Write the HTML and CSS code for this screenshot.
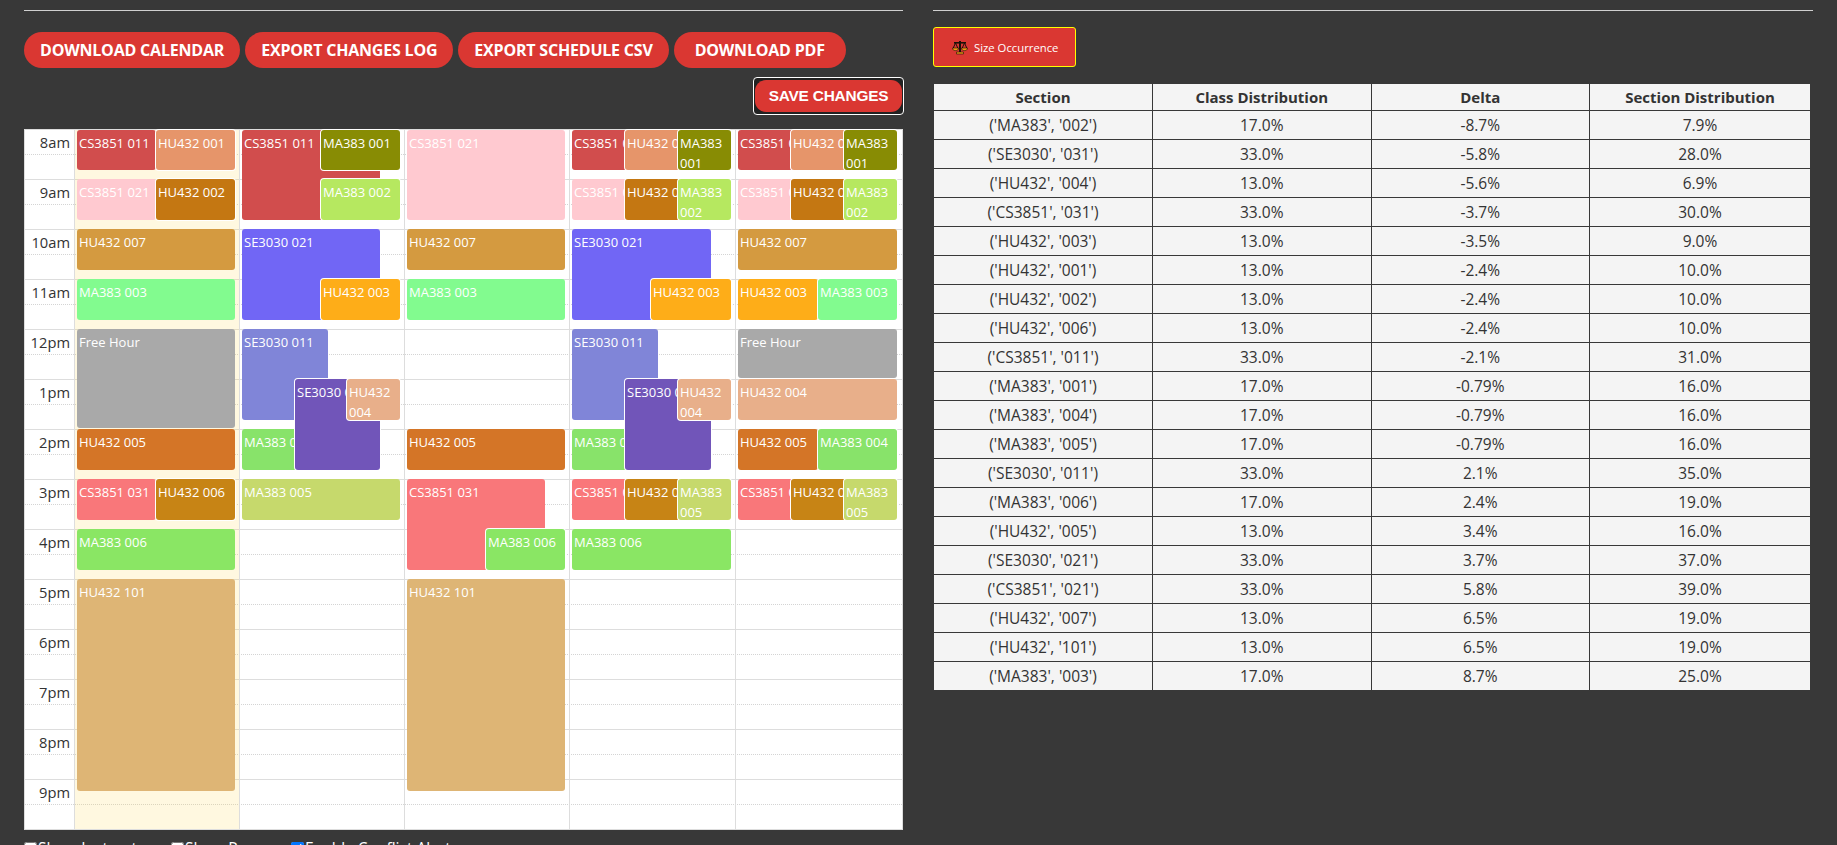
FILE: index.html
```html
<!DOCTYPE html>
<html lang="en">
<head>
  <meta charset="UTF-8" />
  <title>Schedule Editor</title>
  <link rel="stylesheet" href="styles.css">
</head>
<body>
  <div class="page">
    <div class="pane">
      <hr class="rule">
      <div class="actions">
        <button class="pill">Download Calendar</button>
        <button class="pill">Export Changes Log</button>
        <button class="pill">Export Schedule CSV</button>
        <button class="pill pill-wide">Download PDF</button>
      </div>
      <div class="save-row">
        <button class="save"><span class="pill save-inner">Save Changes</span></button>
      </div>

      <div class="calendar">
        <div class="hour"><span class="hour-label">8am</span></div>
        <div class="hour"><span class="hour-label">9am</span></div>
        <div class="hour"><span class="hour-label">10am</span></div>
        <div class="hour"><span class="hour-label">11am</span></div>
        <div class="hour"><span class="hour-label">12pm</span></div>
        <div class="hour"><span class="hour-label">1pm</span></div>
        <div class="hour"><span class="hour-label">2pm</span></div>
        <div class="hour"><span class="hour-label">3pm</span></div>
        <div class="hour"><span class="hour-label">4pm</span></div>
        <div class="hour"><span class="hour-label">5pm</span></div>
        <div class="hour"><span class="hour-label">6pm</span></div>
        <div class="hour"><span class="hour-label">7pm</span></div>
        <div class="hour"><span class="hour-label">8pm</span></div>
        <div class="hour"><span class="hour-label">9pm</span></div>

        <div class="days">
          <div class="day today">
            <div class="event cs011" style="top:0;height:40px;left:2px;width:79px">CS3851 011</div>
            <div class="event hu001 ring" style="top:0;height:40px;left:81px;width:79px">HU432 001</div>
            <div class="event cs021" style="top:49px;height:41px;left:2px;width:79px">CS3851 021</div>
            <div class="event hu002 ring" style="top:49px;height:41px;left:81px;width:79px">HU432 002</div>
            <div class="event hu007" style="top:99px;height:41px;left:2px;width:158px">HU432 007</div>
            <div class="event ma003" style="top:149px;height:41px;left:2px;width:158px">MA383 003</div>
            <div class="event free" style="top:199px;height:99px;left:2px;width:158px">Free Hour</div>
            <div class="event hu005" style="top:299px;height:41px;left:2px;width:158px">HU432 005</div>
            <div class="event cs031" style="top:349px;height:41px;left:2px;width:79px">CS3851 031</div>
            <div class="event hu006 ring" style="top:349px;height:41px;left:81px;width:79px">HU432 006</div>
            <div class="event ma006" style="top:399px;height:41px;left:2px;width:158px">MA383 006</div>
            <div class="event hu101" style="top:449px;height:212px;left:2px;width:158px">HU432 101</div>
          </div>

          <div class="day">
            <div class="event cs011" style="top:0;height:90px;left:2px;width:138px">CS3851 011</div>
            <div class="event ma001 ring" style="top:0;height:40px;left:81px;width:79px">MA383 001</div>
            <div class="event ma002 ring" style="top:49px;height:41px;left:81px;width:79px">MA383 002</div>
            <div class="event se021" style="top:99px;height:91px;left:2px;width:138px">SE3030 021</div>
            <div class="event hu003 ring" style="top:149px;height:41px;left:81px;width:79px">HU432 003</div>
            <div class="event se011" style="top:199px;height:91px;left:2px;width:86px">SE3030 011</div>
            <div class="event ma004" style="top:299px;height:41px;left:2px;width:86px">MA383 004</div>
            <div class="event se031 ring" style="top:249px;height:91px;left:55px;width:85px">SE3030 031</div>
            <div class="event hu004 ring" style="top:249px;height:41px;left:107px;width:53px">HU432 004</div>
            <div class="event ma005" style="top:349px;height:41px;left:2px;width:158px">MA383 005</div>
          </div>

          <div class="day">
            <div class="event cs021" style="top:0;height:90px;left:2px;width:158px">CS3851 021</div>
            <div class="event hu007" style="top:99px;height:41px;left:2px;width:158px">HU432 007</div>
            <div class="event ma003" style="top:149px;height:41px;left:2px;width:158px">MA383 003</div>
            <div class="event hu005" style="top:299px;height:41px;left:2px;width:158px">HU432 005</div>
            <div class="event cs031" style="top:349px;height:91px;left:2px;width:138px">CS3851 031</div>
            <div class="event ma006 ring" style="top:399px;height:41px;left:81px;width:79px">MA383 006</div>
            <div class="event hu101" style="top:449px;height:212px;left:2px;width:158px">HU432 101</div>
          </div>

          <div class="day">
            <div class="event cs011" style="top:0;height:40px;left:2px;width:86px">CS3851 011</div>
            <div class="event hu001 ring" style="top:0;height:40px;left:55px;width:86px">HU432 001</div>
            <div class="event ma001 ring" style="top:0;height:40px;left:108px;width:53px">MA383 001</div>
            <div class="event cs021" style="top:49px;height:41px;left:2px;width:86px">CS3851 021</div>
            <div class="event hu002 ring" style="top:49px;height:41px;left:55px;width:86px">HU432 002</div>
            <div class="event ma002 ring" style="top:49px;height:41px;left:108px;width:53px">MA383 002</div>
            <div class="event se021" style="top:99px;height:91px;left:2px;width:139px">SE3030 021</div>
            <div class="event hu003 ring" style="top:149px;height:41px;left:81px;width:80px">HU432 003</div>
            <div class="event se011" style="top:199px;height:91px;left:2px;width:86px">SE3030 011</div>
            <div class="event ma004" style="top:299px;height:41px;left:2px;width:86px">MA383 004</div>
            <div class="event se031 ring" style="top:249px;height:91px;left:55px;width:86px">SE3030 031</div>
            <div class="event hu004 ring" style="top:249px;height:41px;left:108px;width:53px">HU432 004</div>
            <div class="event cs031" style="top:349px;height:41px;left:2px;width:86px">CS3851 031</div>
            <div class="event hu006 ring" style="top:349px;height:41px;left:55px;width:86px">HU432 006</div>
            <div class="event ma005 ring" style="top:349px;height:41px;left:108px;width:53px">MA383 005</div>
            <div class="event ma006" style="top:399px;height:41px;left:2px;width:159px">MA383 006</div>
          </div>

          <div class="day">
            <div class="event cs011" style="top:0;height:40px;left:2px;width:86px">CS3851 011</div>
            <div class="event hu001 ring" style="top:0;height:40px;left:55px;width:86px">HU432 001</div>
            <div class="event ma001 ring" style="top:0;height:40px;left:108px;width:53px">MA383 001</div>
            <div class="event cs021" style="top:49px;height:41px;left:2px;width:86px">CS3851 021</div>
            <div class="event hu002 ring" style="top:49px;height:41px;left:55px;width:86px">HU432 002</div>
            <div class="event ma002 ring" style="top:49px;height:41px;left:108px;width:53px">MA383 002</div>
            <div class="event hu007" style="top:99px;height:41px;left:2px;width:159px">HU432 007</div>
            <div class="event hu003" style="top:149px;height:41px;left:2px;width:80px">HU432 003</div>
            <div class="event ma003 ring" style="top:149px;height:41px;left:82px;width:79px">MA383 003</div>
            <div class="event free" style="top:199px;height:49px;left:2px;width:159px">Free Hour</div>
            <div class="event hu004" style="top:249px;height:41px;left:2px;width:159px">HU432 004</div>
            <div class="event hu005" style="top:299px;height:41px;left:2px;width:80px">HU432 005</div>
            <div class="event ma004 ring" style="top:299px;height:41px;left:82px;width:79px">MA383 004</div>
            <div class="event cs031" style="top:349px;height:41px;left:2px;width:86px">CS3851 031</div>
            <div class="event hu006 ring" style="top:349px;height:41px;left:55px;width:86px">HU432 006</div>
            <div class="event ma005 ring" style="top:349px;height:41px;left:108px;width:53px">MA383 005</div>
          </div>
        </div>
      </div>

      <div class="toggles">
        <label class="toggle toggle-first"><input type="checkbox">Show Instructor</label>
        <label class="toggle toggle-second"><input type="checkbox">Show Room</label>
        <label class="toggle"><input type="checkbox" checked>Enable Conflict Alerts</label>
      </div>
    </div>

    <div class="pane">
      <hr class="rule">
      <button class="size-btn">
        <svg class="scale-icon" viewBox="0 0 16 16" width="16" height="16" aria-hidden="true">
          <path d="M7 2h2v11H7z" fill="#1a1208"/>
          <path d="M2 3h12v1.6H2z" fill="#1a1208"/>
          <path d="M3.500 4 1 9.500h5zM12.500 4 10 9.500h5z" fill="none" stroke="#1a1208" stroke-width="1"/>
          <path d="M.5 9h6c0 1.800-1.200 2.600-3 2.600S.5 10.800.5 9zM9.500 9h6c0 1.800-1.200 2.600-3 2.600S9.500 10.800 9.500 9z" fill="#f09a12" stroke="#1a1208" stroke-width=".6"/>
          <path d="M4.500 13h7v2h-7z" fill="#f09a12" stroke="#1a1208" stroke-width=".6"/>
        </svg>
        Size Occurrence
      </button>

      <table class="dist-table">
        <thead>
          <tr><th>Section</th><th>Class Distribution</th><th>Delta</th><th>Section Distribution</th></tr>
        </thead>
        <tbody>
          <tr><td>('MA383', '002')</td><td>17.0%</td><td>-8.7%</td><td>7.9%</td></tr>
          <tr><td>('SE3030', '031')</td><td>33.0%</td><td>-5.8%</td><td>28.0%</td></tr>
          <tr><td>('HU432', '004')</td><td>13.0%</td><td>-5.6%</td><td>6.9%</td></tr>
          <tr><td>('CS3851', '031')</td><td>33.0%</td><td>-3.7%</td><td>30.0%</td></tr>
          <tr><td>('HU432', '003')</td><td>13.0%</td><td>-3.5%</td><td>9.0%</td></tr>
          <tr><td>('HU432', '001')</td><td>13.0%</td><td>-2.4%</td><td>10.0%</td></tr>
          <tr><td>('HU432', '002')</td><td>13.0%</td><td>-2.4%</td><td>10.0%</td></tr>
          <tr><td>('HU432', '006')</td><td>13.0%</td><td>-2.4%</td><td>10.0%</td></tr>
          <tr><td>('CS3851', '011')</td><td>33.0%</td><td>-2.1%</td><td>31.0%</td></tr>
          <tr><td>('MA383', '001')</td><td>17.0%</td><td>-0.79%</td><td>16.0%</td></tr>
          <tr><td>('MA383', '004')</td><td>17.0%</td><td>-0.79%</td><td>16.0%</td></tr>
          <tr><td>('MA383', '005')</td><td>17.0%</td><td>-0.79%</td><td>16.0%</td></tr>
          <tr><td>('SE3030', '011')</td><td>33.0%</td><td>2.1%</td><td>35.0%</td></tr>
          <tr><td>('MA383', '006')</td><td>17.0%</td><td>2.4%</td><td>19.0%</td></tr>
          <tr><td>('HU432', '005')</td><td>13.0%</td><td>3.4%</td><td>16.0%</td></tr>
          <tr><td>('SE3030', '021')</td><td>33.0%</td><td>3.7%</td><td>37.0%</td></tr>
          <tr><td>('CS3851', '021')</td><td>33.0%</td><td>5.8%</td><td>39.0%</td></tr>
          <tr><td>('HU432', '007')</td><td>13.0%</td><td>6.5%</td><td>19.0%</td></tr>
          <tr><td>('HU432', '101')</td><td>13.0%</td><td>6.5%</td><td>19.0%</td></tr>
          <tr><td>('MA383', '003')</td><td>17.0%</td><td>8.7%</td><td>25.0%</td></tr>
        </tbody>
      </table>
    </div>
  </div>
</body>
</html>
```

FILE: styles.css
```css
html, body {
  height: 845px;
  overflow: hidden;
}

body {
  margin: 0;
  background-color: #383838;
  color: #fff;
  font-family: "Open Sans", "Noto Sans", sans-serif;
}

.page {
  display: grid;
  grid-template-columns: 879px 880px;
  gap: 30px;
  padding: 0 24px;
}

.rule {
  margin: 10px 0 0;
  border: 0;
  border-top: 1px solid #d0d0d0;
}

/* buttons */
.actions {
  display: flex;
  gap: 5px;
  margin-top: 21px;
}

.pill {
  height: 36px;
  padding: 0 16px;
  border: 0;
  border-radius: 18px;
  background-color: #da3732;
  color: #fff;
  font-family: inherit;
  font-size: 16px;
  font-weight: 700;
  letter-spacing: -0.2px;
  text-transform: uppercase;
  white-space: nowrap;
}

.pill-wide {
  padding: 0 21px;
}

.save-row {
  display: flex;
  justify-content: flex-end;
  margin-top: 9px;
}

.save {
  box-sizing: border-box;
  width: 151px;
  height: 38px;
  margin-right: -1px;
  padding: 0;
  display: flex;
  align-items: center;
  justify-content: center;
  border: 1px solid #fff;
  border-radius: 4px;
  background-color: #222;
}

.save-inner {
  display: flex;
  align-items: center;
  justify-content: center;
  width: 147px;
  height: 32px;
  padding: 0;
  border-radius: 11px;
  font-size: 15.400px;
}

/* calendar */
.calendar {
  position: relative;
  box-sizing: border-box;
  height: 701px;
  margin-top: 14px;
  background-color: #fff;
  color: #333;
  border: 1px solid #ddd;
}

.hour {
  position: relative;
  box-sizing: border-box;
  height: 50px;
  border-top: 1px solid #ddd;
}

.hour:first-child {
  height: 49px;
  border-top: 0;
}

.hour::after {
  content: "";
  position: absolute;
  top: 24px;
  left: 0;
  right: 0;
  border-top: 1px dotted #d4d4d4;
}

.hour-label {
  display: block;
  width: 45px;
  padding-top: 1px;
  text-align: right;
  font-size: 14.700px;
  line-height: 22px;
}

.days {
  position: absolute;
  top: 0;
  bottom: 0;
  left: 49px;
  right: 0;
  display: grid;
  grid-template-columns: 165px 165px 165px 166px 1fr;
}

.day {
  position: relative;
  border-left: 1px solid #ddd;
}

.today {
  background-color: rgba(255, 220, 100, 0.2);
}

.event {
  position: absolute;
  box-sizing: border-box;
  padding: 3px 2px;
  overflow: hidden;
  border-radius: 3px;
  color: #fff;
  font-size: 13px;
  line-height: 20px;
}

.ring {
  box-shadow: 0 0 0 1px #fff;
}

.cs011 { background-color: #d14d4d; }
.cs021 { background-color: #ffc9d0; }
.cs031 { background-color: #f9777a; }
.hu001 { background-color: #e6956a; }
.hu002 { background-color: #c47712; }
.hu003 { background-color: #fead18; }
.hu004 { background-color: #e8af8a; }
.hu005 { background-color: #d47527; }
.hu006 { background-color: #c78415; }
.hu007 { background-color: #d49a40; }
.hu101 { background-color: #deb575; }
.ma001 { background-color: #888c04; }
.ma002 { background-color: #b6e860; }
.ma003 { background-color: #82fb8f; }
.ma004 { background-color: #88e36a; }
.ma005 { background-color: #c6d96c; }
.ma006 { background-color: #8ae664; }
.se011 { background-color: #8085d8; }
.se021 { background-color: #7166f5; }
.se031 { background-color: #7155b9; }
.free { background-color: #a9a9a9; }

.toggles {
  display: flex;
  margin-top: 11px;
  font-size: 15.500px;
  line-height: 14px;
}

.toggle {
  display: flex;
  align-items: flex-start;
}

.toggle-first {
  width: 147px;
}

.toggle-second {
  width: 120px;
}

.toggle input {
  width: 13px;
  height: 13px;
  margin: 1px 1px 0 0;
}

/* right side */
.size-btn {
  display: flex;
  align-items: center;
  gap: 6px;
  box-sizing: border-box;
  width: 143px;
  height: 40px;
  margin-top: 16px;
  padding: 0 0 0 18px;
  border: 1px solid #ffff00;
  border-radius: 3px;
  background-color: #da3732;
  color: #fff;
  font-family: inherit;
  font-size: 11.300px;
  white-space: nowrap;
}

.scale-icon {
  flex: none;
}

.dist-table {
  width: 876px;
  margin: 17px 0 0 1px;
  border-collapse: collapse;
  table-layout: fixed;
  background-color: #f4f4f4;
  color: #333;
  font-size: 15.500px;
  text-align: center;
}

.dist-table th {
  height: 26px;
  padding: 0;
  border-left: 1px solid #383838;
  font-size: 15px;
  font-weight: 700;
}

.dist-table th:first-child {
  width: 218px;
}

.dist-table th:last-child {
  width: 220px;
}

.dist-table td {
  height: 28px;
  padding: 0;
  border-top: 1px solid #383838;
  border-left: 1px solid #383838;
}

.dist-table th:first-child,
.dist-table td:first-child {
  border-left: 0;
}
```
